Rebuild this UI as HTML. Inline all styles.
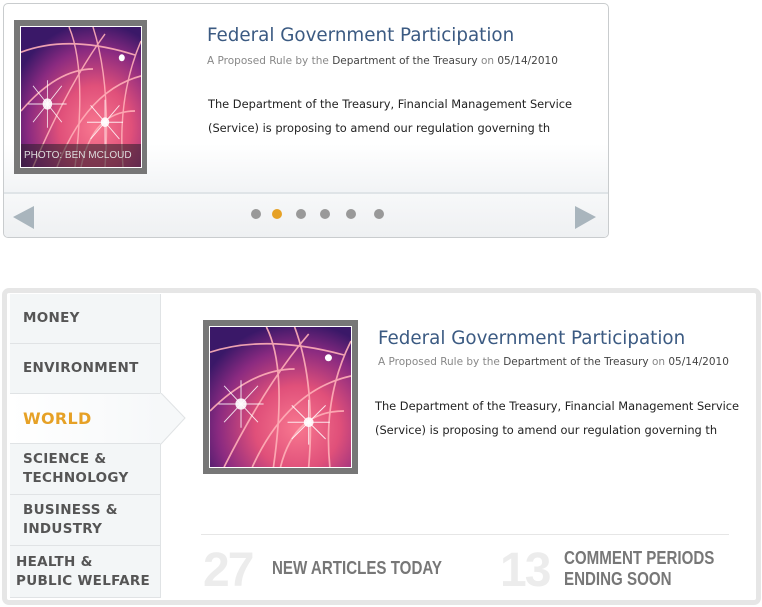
<!DOCTYPE html>
<html><head><meta charset="utf-8"><style>
*{margin:0;padding:0;box-sizing:border-box}
body{width:762px;height:607px;background:#fff;font-family:"DejaVu Sans","Liberation Sans",sans-serif;position:relative;overflow:hidden}
.a{position:absolute}
.top{left:3px;top:3px;width:606px;height:235px;border:1px solid #c9ccce;border-radius:5px;background:linear-gradient(#fff 60%,#f1f3f5 82%);overflow:hidden}
.frame{background:#777;position:absolute}
.frame .in{position:absolute;border:1px solid #fff;overflow:hidden}
.title{color:#3b5a82;font-size:18.3px;white-space:nowrap}
.sub{color:#888;font-size:10.5px;white-space:nowrap}
.sub b{font-weight:normal;color:#444}
.body{color:#222;font-size:11.4px;white-space:nowrap;line-height:24px}
.foot{left:0;top:188px;width:606px;height:47px;border-top:2px solid #dfe4e7;background:linear-gradient(#f7f8f9,#eef0f2)}
.dot{width:10px;height:10px;border-radius:50%;background:#999;top:15px}
.bot{left:2px;top:288px;width:759px;height:317px;border:5px solid #e6e6e6;border-radius:7px;background:#fff}
.nav{left:3px;width:151px;background:#f3f6f7;border-bottom:1px solid #e0e3e5;border-right:1px solid #e0e3e5;color:#555;font-weight:bold;font-size:13.5px;letter-spacing:.3px;padding-left:13px;display:flex;align-items:center;line-height:19px;white-space:nowrap}
.big{font-family:"Liberation Sans",sans-serif;font-weight:bold;font-size:48px;color:#ececec;letter-spacing:-2px}
.st{font-family:"Liberation Sans",sans-serif;font-weight:bold;font-size:18px;color:#777;transform:scaleX(.84);transform-origin:left;line-height:21px;white-space:nowrap}
</style></head><body>
<svg width="0" height="0" style="position:absolute"><defs>
<radialGradient id="g1" cx="62%" cy="72%" r="75%"><stop offset="0" stop-color="#f87890"/><stop offset=".4" stop-color="#e0507a"/><stop offset=".75" stop-color="#8a2a80"/><stop offset="1" stop-color="#3a1868"/></radialGradient>
<symbol id="fw" viewBox="0 0 100 100" preserveAspectRatio="none">
<rect width="100" height="100" fill="url(#g1)"/>
<g stroke="#ffb0b8" stroke-width="1.2" fill="none" opacity=".9">
<path d="M0 18 Q40 5 95 20"/><path d="M10 100 Q40 40 70 5"/><path d="M30 100 Q55 45 100 35"/><path d="M60 0 Q75 40 70 100"/><path d="M85 100 Q80 50 100 10"/><path d="M0 60 Q30 30 60 30"/><path d="M50 100 Q60 60 95 60"/><path d="M40 0 Q55 30 45 100"/>
</g>
<g stroke="#fff" stroke-width=".7" opacity=".85"><path d="M10 42 L34 68 M6 55 L38 55 M22 38 L22 72 M10 68 L34 42"/><path d="M58 56 L82 80 M55 68 L85 68 M70 52 L70 84 M58 80 L82 56"/></g>
<circle cx="22" cy="55" r="4" fill="#fff" opacity=".9"/><circle cx="70" cy="68" r="3.5" fill="#fff" opacity=".9"/><circle cx="84" cy="22" r="2.5" fill="#fff"/>
</symbol></defs></svg>

<div class="a top">
 <div class="frame" style="left:10px;top:16px;width:133px;height:154px">
  <div class="in" style="left:6px;top:6px;width:122px;height:142px"><svg width="120" height="140"><use href="#fw"/></svg>
   <div class="a" style="left:0;bottom:0;width:120px;height:23px;background:rgba(40,30,40,.55);color:#ddd;font-family:'Liberation Sans',sans-serif;font-size:10px;padding:6px 0 0 3px">PHOTO: BEN MCLOUD</div></div>
 </div>
 <div class="a title" style="left:203px;top:21px">Federal Government Participation</div>
 <div class="a sub" style="left:203px;top:51px">A Proposed Rule by the <b>Department of the Treasury</b> on <b>05/14/2010</b></div>
 <div class="a body" style="left:204px;top:88px">The Department of the Treasury, Financial Management Service<br>(Service) is proposing to amend our regulation governing th</div>
 <div class="a foot">
  <svg class="a" style="left:9px;top:12px" width="22" height="24"><path d="M0 11 L21 0 L21 23 Z" fill="#a9b5bd"/></svg>
  <svg class="a" style="left:571px;top:12px" width="22" height="24"><path d="M21 11 L0 0 L0 23 Z" fill="#a9b5bd"/></svg>
  <div class="a dot" style="left:247px"></div><div class="a dot" style="left:268px;background:#e6a126"></div><div class="a dot" style="left:292px"></div><div class="a dot" style="left:316px"></div><div class="a dot" style="left:342px"></div><div class="a dot" style="left:370px"></div>
 </div>
</div>

<div class="a bot">
 <div class="a nav" style="top:1px;height:50px">MONEY</div>
 <div class="a nav" style="top:51px;height:50px">ENVIRONMENT</div>
 <div class="a nav" style="top:101px;height:50px;background:linear-gradient(90deg,#fff,#f6f8f9);color:#e6a126;font-size:16px;border-right:none">WORLD</div>
 <svg class="a" style="left:153px;top:100px" width="30" height="52"><path d="M0 0 L1 0 L25 25 L1 51 L0 51" fill="#f6f8f9" stroke="#e0e3e5"/></svg>
 <div class="a nav" style="top:151px;height:51px">SCIENCE &amp;<br>TECHNOLOGY</div>
 <div class="a nav" style="top:202px;height:51px">BUSINESS &amp;<br>INDUSTRY</div>
 <div class="a nav" style="top:253px;height:52px;padding-left:6px">HEALTH &amp;<br>PUBLIC WELFARE</div>
 <div class="frame" style="left:196px;top:27px;width:155px;height:154px">
  <div class="in" style="left:6px;top:6px;width:143px;height:142px"><svg width="141" height="140"><use href="#fw"/></svg></div>
 </div>
 <div class="a title" style="left:371px;top:35px">Federal Government Participation</div>
 <div class="a sub" style="left:371px;top:63px">A Proposed Rule by the <b>Department of the Treasury</b> on <b>05/14/2010</b></div>
 <div class="a body" style="left:368px;top:101px">The Department of the Treasury, Financial Management Service<br>(Service) is proposing to amend our regulation governing th</div>
 <div class="a" style="left:194px;top:241px;width:528px;height:1px;background:#e6e6e6"></div>
 <div class="a big" style="left:196px;top:250px">27</div>
 <div class="a st" style="left:265px;top:265px">NEW ARTICLES TODAY</div>
 <div class="a big" style="left:493px;top:250px">13</div>
 <div class="a st" style="left:557px;top:255px">COMMENT PERIODS<br>ENDING SOON</div>
</div>
</body></html>
